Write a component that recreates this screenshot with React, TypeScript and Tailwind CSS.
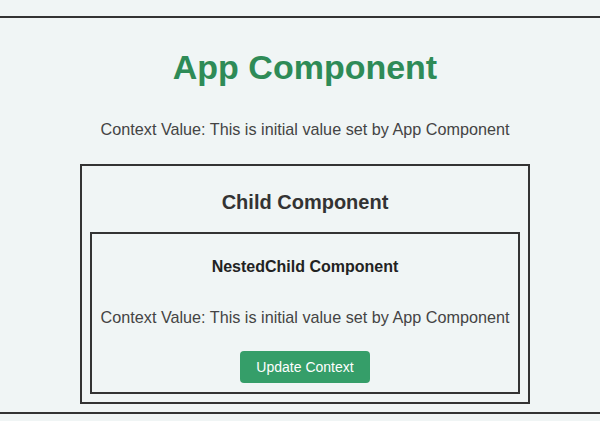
export default function App() {
  return (
    <div className="min-h-[421px] w-full bg-[#f0f5f5] pt-4" style={{ fontFamily: '"Liberation Sans", Arial, sans-serif' }}>
      <div className="border-y-2 border-[#333] flex flex-col items-center pl-[10px]">
        <h1 className="mt-[30px] text-[34px] leading-[39px] font-bold text-[#2e8b57]">App Component</h1>
        <p className="mt-[33px] text-[16.2px] leading-[18px] text-[#444]">
          Context Value: This is initial value set by App Component
        </p>
        <div className="mt-[26px] mb-[8px] w-[450px] border-2 border-[#333] px-[8px] pb-[8px] flex flex-col items-center">
          <h2 className="mt-[25px] text-[20px] leading-[23px] font-bold text-[#333]">Child Component</h2>
          <div className="mt-[18px] w-full border-2 border-[#333] flex flex-col items-center pb-[9px]">
            <h3 className="mt-[24px] text-[16px] leading-[18px] font-bold text-[#222]">NestedChild Component</h3>
            <p className="mt-[32px] text-[16.2px] leading-[18px] text-[#444]">
              Context Value: This is initial value set by App Component
            </p>
            <button className="mt-[25px] h-[32px] px-[16px] rounded-[4px] bg-[#359e69] text-white text-[14px]">
              Update Context
            </button>
          </div>
        </div>
      </div>
    </div>
  );
}
